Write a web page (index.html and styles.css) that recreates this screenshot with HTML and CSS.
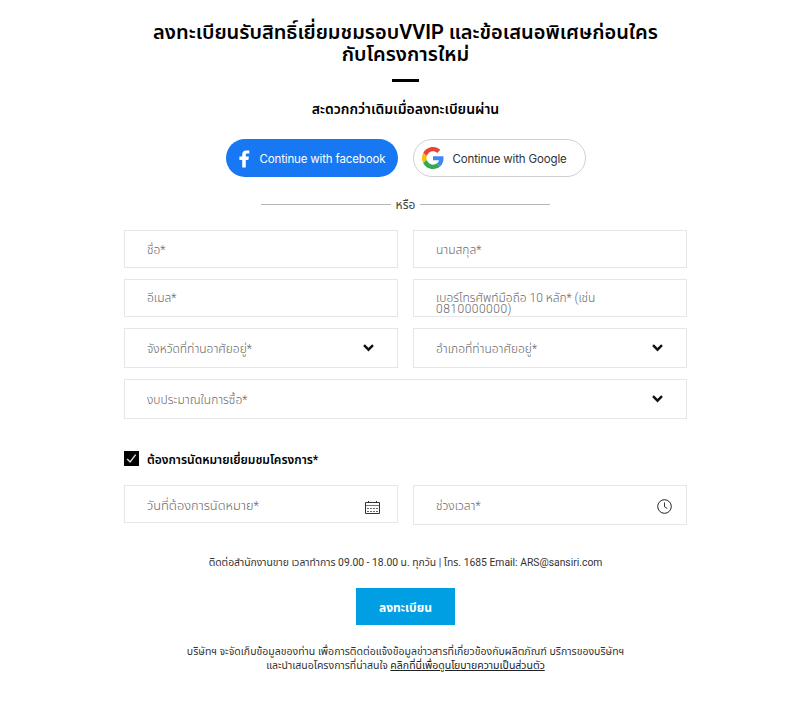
FILE: index.html
```html
<!DOCTYPE html>
<html lang="th">
<head>
    <meta charset="UTF-8">
    <meta name="viewport" content="width=device-width, initial-scale=1.0">
    <title>ลงทะเบียน</title>
    <link rel="stylesheet" href="styles.css">
</head>
<body>
    <form class="register">
        <h1 class="title">ลงทะเบียนรับสิทธิ์เยี่ยมชมรอบVVIP และข้อเสนอพิเศษก่อนใคร<br>กับโครงการใหม่</h1>
        <div class="title-line"></div>
        <p class="subtitle">สะดวกกว่าเดิมเมื่อลงทะเบียนผ่าน</p>

        <div class="social">
            <a class="social-btn facebook">
                <svg class="fb-icon" width="11" height="18" viewBox="0 0 11 18"><path fill="#fff" d="M3.2 17.5V9.9H.4V6.6h2.8V4.5C3.2 1.6 4.8.4 7.5.4c1.1 0 2 .1 2.8.2v2.8H8.4c-1.3 0-1.6.7-1.6 1.4v1.8h3.1l-.5 3.3H6.8v7.6z"/></svg>
                <span>Continue with facebook</span>
            </a>
            <a class="social-btn google">
                <svg class="g-icon" width="22" height="22" viewBox="0 0 48 48">
                    <path fill="#EA4335" d="M24 9.5c3.54 0 6.71 1.22 9.21 3.6l6.85-6.85C35.9 2.38 30.47 0 24 0 14.62 0 6.51 5.38 2.56 13.22l7.98 6.19C12.43 13.72 17.74 9.5 24 9.5z"/>
                    <path fill="#4285F4" d="M46.98 24.55c0-1.57-.15-3.09-.38-4.55H24v9.02h12.94c-.58 2.96-2.26 5.48-4.78 7.18l7.73 6c4.51-4.18 7.09-10.36 7.09-17.65z"/>
                    <path fill="#FBBC05" d="M10.53 28.59c-.48-1.45-.76-2.99-.76-4.59s.27-3.14.76-4.59l-7.98-6.19C.92 16.46 0 20.12 0 24c0 3.88.92 7.54 2.56 10.78l7.97-6.19z"/>
                    <path fill="#34A853" d="M24 48c6.48 0 11.93-2.13 15.89-5.81l-7.73-6c-2.15 1.45-4.92 2.3-8.16 2.3-6.26 0-11.57-4.22-13.47-9.91l-7.98 6.19C6.51 42.62 14.62 48 24 48z"/>
                </svg>
                <span>Continue with Google</span>
            </a>
        </div>

        <div class="or"><span class="or-line"></span><span class="or-text">หรือ</span><span class="or-line"></span></div>

        <div class="fields">
            <div class="field"><span>ชื่อ*</span></div>
            <div class="field"><span>นามสกุล*</span></div>
            <div class="field email"><span>อีเมล*</span></div>
            <div class="field phone"><div>เบอร์โทรศัพท์มือถือ 10 หลัก* (เช่น<br><span class="number">0810000000)</span></div></div>
            <div class="field select">
                <span>จังหวัดที่ท่านอาศัยอยู่*</span>
                <svg class="arrow" width="11" height="8" viewBox="0 0 11 8"><path d="M1 1.2l4.5 4.5L10 1.2" fill="none" stroke="#111" stroke-width="2.4"/></svg>
            </div>
            <div class="field select">
                <span>อำเภอที่ท่านอาศัยอยู่*</span>
                <svg class="arrow" width="11" height="8" viewBox="0 0 11 8"><path d="M1 1.2l4.5 4.5L10 1.2" fill="none" stroke="#111" stroke-width="2.4"/></svg>
            </div>
            <div class="field select wide">
                <span>งบประมาณในการซื้อ*</span>
                <svg class="arrow" width="11" height="8" viewBox="0 0 11 8"><path d="M1 1.2l4.5 4.5L10 1.2" fill="none" stroke="#111" stroke-width="2.4"/></svg>
            </div>
        </div>

        <div class="appoint">
            <svg class="checkbox" width="15" height="15" viewBox="0 0 15 15"><rect width="15" height="15" fill="#000"/><path d="M3.2 7.9l2.9 3L11.7 3.6" fill="none" stroke="#ddd" stroke-width="1.4"/></svg>
            <span class="appoint-text">ต้องการนัดหมายเยี่ยมชมโครงการ*</span>
        </div>

        <div class="fields visit">
            <div class="field">
                <span class="date">วันที่ต้องการนัดหมาย*</span>
                <svg class="calendar" width="15" height="13" viewBox="0 0 15 13">
                    <path d="M.5 1.5h14v11H.5zM3.5 0v2M11.5 0v2" fill="none" stroke="#333"/>
                    <path d="M1 4.5h13" stroke="#777"/>
                    <path d="M2 7.5h11M2 10.5h11" stroke="#666" stroke-dasharray="2 1"/>
                </svg>
            </div>
            <div class="field select">
                <span>ช่วงเวลา*</span>
                <svg class="clock" width="15" height="15" viewBox="0 0 15 15"><circle cx="7.5" cy="7.5" r="6.8" fill="none" stroke="#222"/><path d="M7.5 3.5v4.3l2.8 1.7" fill="none" stroke="#333"/></svg>
            </div>
        </div>

        <p class="contact">ติดต่อสำนักงานขาย เวลาทำการ 09.00 - 18.00 น. ทุกวัน | โทร. 1685 Email: ARS@sansiri.com</p>
        <button class="submit" type="button">ลงทะเบียน</button>
        <p class="policy">บริษัทฯ จะจัดเก็บข้อมูลของท่าน เพื่อการติดต่อแจ้งข้อมูลข่าวสารที่เกี่ยวข้องกับผลิตภัณฑ์ บริการของบริษัทฯ<br>และนำเสนอโครงการที่น่าสนใจ <a>คลิกที่นี่เพื่อดูนโยบายความเป็นส่วนตัว</a></p>
    </form>
</body>
</html>
```

FILE: styles.css
```css
* {
    box-sizing: border-box;
}

body {
    margin: 0;
    background: #fff;
    color: #000;
    font-family: Roboto, "Noto Sans Thai", "Noto Sans", sans-serif;
}

.register {
    width: 563px;
    margin-left: 124px;
    padding-top: 21px;
    display: flex;
    flex-direction: column;
    align-items: center;
}

h1, p {
    margin: 0;
    white-space: nowrap;
    text-align: center;
}

.title {
    height: 44px;
    font-size: 20px;
    line-height: 22px;
    font-weight: 600;
}

.title-line {
    width: 27px;
    height: 3px;
    margin-top: 14px;
    background: #000;
}

.subtitle {
    height: 20px;
    margin-top: 17px;
    font-size: 14px;
    line-height: 20px;
    font-weight: 600;
}

.social {
    display: flex;
    gap: 15px;
    margin-top: 20px;
}

.social-btn {
    display: flex;
    align-items: center;
    width: 173px;
    height: 38px;
    border-radius: 19px;
    font-family: Inter, sans-serif;
    font-size: 11.5px;
    letter-spacing: -0.15px;
    white-space: nowrap;
}

.facebook {
    width: 172px;
    background: #1877f2;
    color: #fff;
    padding: 2px 0 0 13px;
    gap: 10px;
}

.google {
    border: 1px solid #d0d0d0;
    color: #333;
    padding-left: 8px;
    gap: 9px;
}

.google span {
    padding-top: 2px;
}

.or {
    display: flex;
    align-items: center;
    justify-content: center;
    gap: 5px;
    height: 19px;
    margin-top: 18px;
    font-size: 12px;
    color: #444;
}

.or-line {
    width: 130px;
    height: 1px;
    background: #b5b5b5;
}

.or-text {
    line-height: 20px;
}

.fields {
    width: 100%;
    display: grid;
    grid-template-columns: 274px 274px;
    gap: 11px 15px;
    align-items: start;
    margin-top: 16px;
}

.field {
    display: flex;
    align-items: center;
    justify-content: space-between;
    height: 38px;
    padding: 2px 17px 0 22px;
    border: 1px solid #e6e6e6;
    font-size: 12px;
    font-weight: 300;
    line-height: 11px;
    color: #666;
    white-space: nowrap;
}

.email {
    padding-top: 0;
}

.phone {
    align-items: flex-start;
    padding-top: 13px;
}

.number {
    letter-spacing: 0.5px;
}

.select {
    height: 40px;
    padding-right: 23px;
}

.arrow {
    margin-bottom: 2px;
}

.wide {
    grid-column: 1 / 3;
}

.appoint {
    align-self: flex-start;
    display: flex;
    align-items: center;
    gap: 8px;
    height: 15px;
    margin-top: 32px;
    font-size: 12px;
    font-weight: 600;
    white-space: nowrap;
}

.appoint-text {
    padding-top: 2px;
}

.visit {
    margin-top: 19px;
}

.date {
    font-size: 12.8px;
}

.calendar {
    margin-top: 4px;
}

.clock {
    margin: 1px -9px 0 0;
}

.contact {
    height: 16px;
    margin-top: 30px;
    font-size: 10.35px;
    line-height: 16px;
    color: #333;
}

.submit {
    width: 99px;
    height: 37px;
    margin-top: 17px;
    padding: 3px 0 0;
    border: 0;
    background: #009fe3;
    color: #fff;
    font-family: inherit;
    font-size: 12px;
    font-weight: 700;
    white-space: nowrap;
}

.policy {
    margin-top: 20px;
    font-size: 10.53px;
    line-height: 14px;
    color: #333;
}

.policy a {
    color: #222;
    text-decoration: underline;
}
```
